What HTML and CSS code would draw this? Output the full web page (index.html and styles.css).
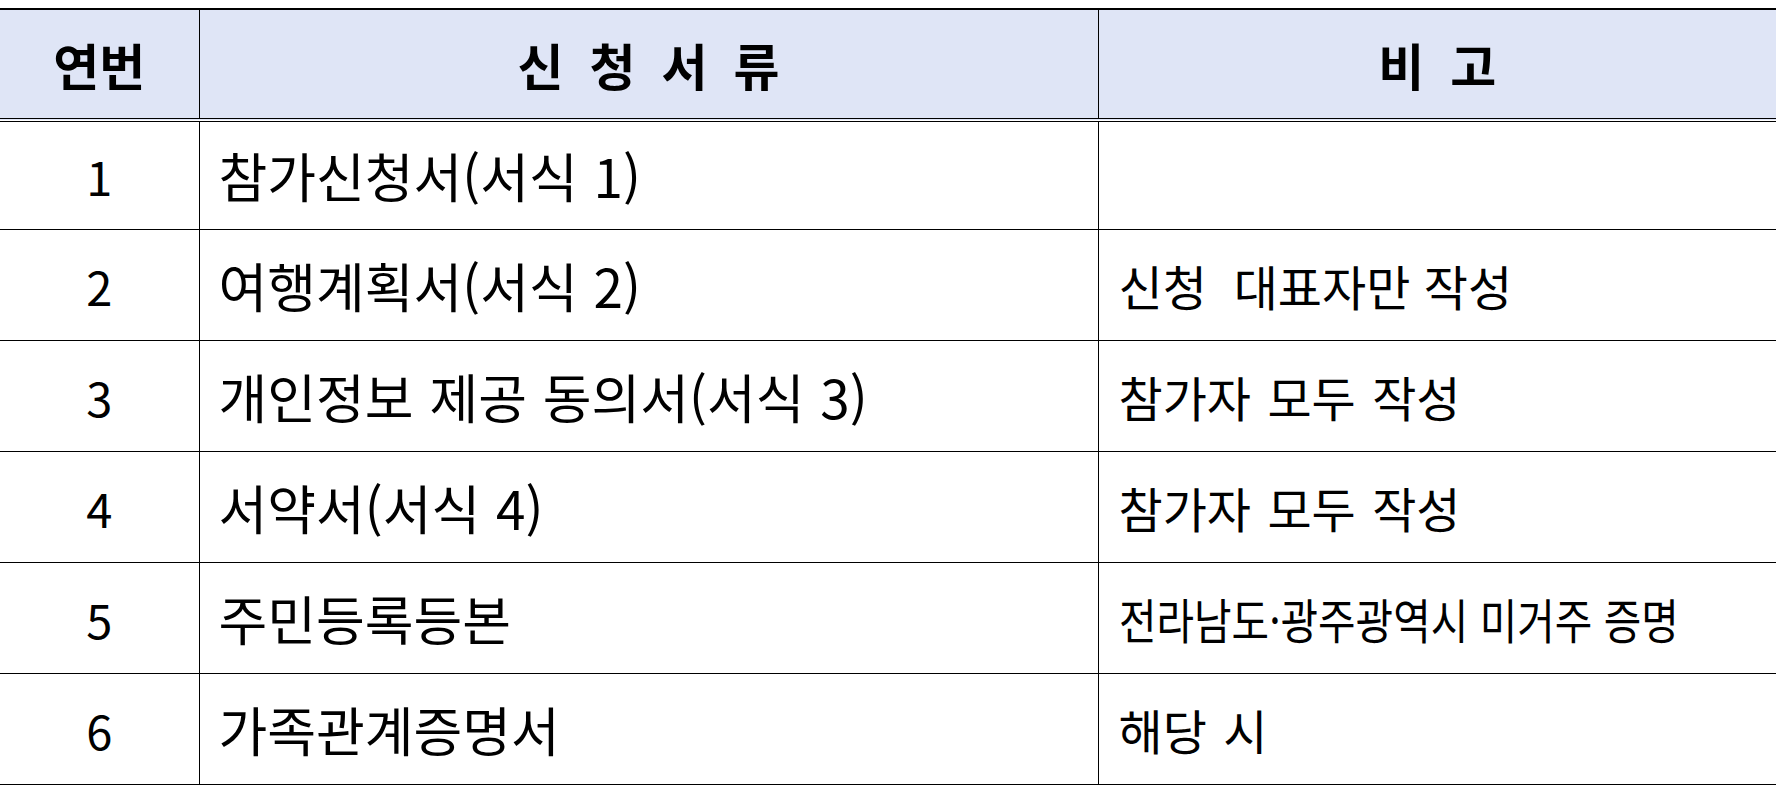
FILE: index.html
```html
<!DOCTYPE html>
<html lang="ko">
<head>
<meta charset="utf-8">
<title>신청서류</title>
<link rel="stylesheet" href="styles.css">
</head>
<body>
<table class="docs">
  <colgroup>
    <col class="c-no">
    <col class="c-doc">
    <col class="c-note">
  </colgroup>
  <thead>
    <tr>
      <th>연번</th>
      <th class="spaced">신 청 서 류</th>
      <th class="spaced">비 고</th>
    </tr>
  </thead>
  <tbody>
    <tr class="first"><td class="num">1</td><td class="doc">참가신청서(서식 1)</td><td class="note"></td></tr>
    <tr><td class="num">2</td><td class="doc">여행계획서(서식 2)</td><td class="note plain">신청&nbsp; 대표자만 작성</td></tr>
    <tr><td class="num">3</td><td class="doc">개인정보 제공 동의서(서식 3)</td><td class="note">참가자 모두 작성</td></tr>
    <tr><td class="num">4</td><td class="doc">서약서(서식 4)</td><td class="note">참가자 모두 작성</td></tr>
    <tr><td class="num">5</td><td class="doc">주민등록등본</td><td class="note"><span class="narrow">전라남도·광주광역시 미거주 증명</span></td></tr>
    <tr><td class="num">6</td><td class="doc">가족관계증명서</td><td class="note">해당 시</td></tr>
  </tbody>
</table>
</body>
</html>
```
FILE: styles.css
```css
html, body {
  margin: 0;
  padding: 0;
  background: #ffffff;
}
body {
  padding-top: 8px;
  font-family: "Noto Sans CJK KR", "Noto Sans", sans-serif;
  color: #000;
}
.docs {
  width: 1776px;
  border-collapse: collapse;
  table-layout: fixed;
}
.c-no { width: 199px; }
.c-doc { width: 899px; }
.c-note { width: 678px; }

.docs th {
  background: #dfe5f6;
  height: 108px;
  padding: 0;
  font-size: 50px;
  font-weight: 700;
  line-height: 1;
  border-top: 2px solid #000;
  border-bottom: 4px double #000;
  border-right: 1px solid #000;
  text-align: center;
  vertical-align: middle;
}
.docs th.spaced { letter-spacing: 6px; text-indent: 6px; }
.docs th:last-child, .docs td:last-child { border-right: none; }

.docs td {
  height: 110px;
  padding: 0 0 0 19px;
  line-height: 1;
  font-weight: 400;
  border-bottom: 1px solid #000;
  border-right: 1px solid #000;
  vertical-align: middle;
  white-space: nowrap;
  overflow: visible;
}
.docs tr.first td { height: 107px; }
.docs td.num {
  font-size: 47px;
  text-align: center;
  padding: 0;
}
.docs td.doc { font-size: 53px; word-spacing: 1px; }
.docs td.note { font-size: 48px; padding-left: 20px; word-spacing: 3px; }
.docs td.note.plain { word-spacing: 0; }
.narrow {
  display: inline-block;
  transform: scaleX(0.85);
  transform-origin: left center;
  word-spacing: 0;
}
```
